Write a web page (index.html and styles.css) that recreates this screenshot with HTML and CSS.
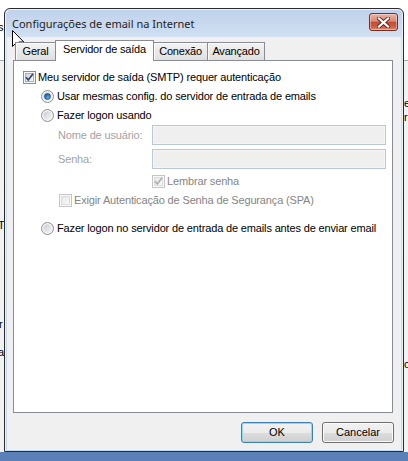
FILE: index.html
```html
<!DOCTYPE html>
<html lang="pt">
<head>
<meta charset="utf-8">
<title>Configurações de email na Internet</title>
<link rel="stylesheet" href="styles.css">
</head>
<body>
<svg class="defs" width="0" height="0" aria-hidden="true">
  <defs>
    <linearGradient id="gbox" x1="0" y1="0" x2="1" y2="1">
      <stop offset="0" stop-color="#cdd1d6"/>
      <stop offset="1" stop-color="#fbfbfb"/>
    </linearGradient>
    <linearGradient id="gboxd" x1="0" y1="0" x2="1" y2="1">
      <stop offset="0" stop-color="#e6e6e6"/>
      <stop offset="1" stop-color="#fafafa"/>
    </linearGradient>
    <linearGradient id="grad" x1="0" y1="0" x2="1" y2="1">
      <stop offset="0" stop-color="#c9ccd1"/>
      <stop offset="1" stop-color="#f7f7f7"/>
    </linearGradient>
    <radialGradient id="gdot" cx="0.6" cy="0.65" r="0.6">
      <stop offset="0" stop-color="#5fb2ea"/>
      <stop offset="1" stop-color="#175a9b"/>
    </radialGradient>
  </defs>
</svg>
<div class="desktop">
  <span class="frag frag-s">s</span>
  <span class="frag frag-t">T</span>
  <span class="frag frag-r">r</span>
  <span class="frag frag-a">a</span>
  <span class="frag frag-e">e</span>
  <span class="frag frag-r2">r</span>
  <span class="frag frag-o">o</span>

  <div class="window">
    <div class="titlebar">
      <span class="title">Configurações de email na Internet</span>
      <button class="close" aria-label="Fechar">
        <svg width="13" height="11" viewBox="0 0 13 11">
          <path d="M2 1.5 L11 9.5 M11 1.5 L2 9.5" stroke="#5e2a22" stroke-width="4" stroke-linecap="square" fill="none"/>
          <path d="M2 1.5 L11 9.5 M11 1.5 L2 9.5" stroke="#ffffff" stroke-width="2.2" stroke-linecap="square" fill="none"/>
        </svg>
      </button>
    </div>
    <div class="client">
      <div class="tabs">
        <div class="tab tab-geral">Geral</div>
        <div class="tab tab-servidor active">Servidor de saída</div>
        <div class="tab tab-conexao">Conexão</div>
        <div class="tab tab-avancado">Avançado</div>
      </div>
      <div class="panel">
        <div class="row r1">
          <svg class="ctl" width="13" height="13" viewBox="0 0 13 13"><rect x=".5" y=".5" width="12" height="12" fill="#f6f6f6" stroke="#8e8f8f"/><rect x="2.5" y="2.5" width="8" height="8" fill="url(#gbox)" stroke="#aeb3b9"/><path d="M3 6.3 L5.3 8.9 L10 2.7" fill="none" stroke="#34477e" stroke-width="1.7"/></svg>
          <span class="lbl lbl-cb">Meu servidor de saída (SMTP) requer autenticação</span>
        </div>
        <div class="row r2">
          <svg class="ctl" width="13" height="13" viewBox="0 0 13 13"><circle cx="6.5" cy="6.5" r="6" fill="#f4f4f4" stroke="#8e8f8f"/><circle cx="6.5" cy="6.5" r="4.2" fill="url(#grad)"/><circle cx="6.5" cy="6.5" r="3" fill="url(#gdot)" stroke="#1b4e86" stroke-width=".6"/></svg>
          <span class="lbl lbl-rd">Usar mesmas config. do servidor de entrada de emails</span>
        </div>
        <div class="row r3">
          <svg class="ctl" width="13" height="13" viewBox="0 0 13 13"><circle cx="6.5" cy="6.5" r="6" fill="#f4f4f4" stroke="#8e8f8f"/><circle cx="6.5" cy="6.5" r="4.2" fill="url(#grad)"/></svg>
          <span class="lbl lbl-rd">Fazer logon usando</span>
        </div>
        <div class="row r-user">
          <span class="field-lbl">Nome de usuário:</span>
          <span class="textbox"></span>
        </div>
        <div class="row r-pass">
          <span class="field-lbl">Senha:</span>
          <span class="textbox"></span>
        </div>
        <div class="row r-rem">
          <svg class="ctl" width="13" height="13" viewBox="0 0 13 13"><rect x=".5" y=".5" width="12" height="12" fill="#f9f9f9" stroke="#c5c5c5"/><rect x="2.5" y="2.5" width="8" height="8" fill="url(#gboxd)" stroke="#dcdcdc"/><path d="M3 6.3 L5.3 8.9 L10 2.7" fill="none" stroke="#b0b0b0" stroke-width="1.7"/></svg>
          <span class="lbl lbl-cb dis">Lembrar senha</span>
        </div>
        <div class="row r-spa">
          <svg class="ctl" width="13" height="13" viewBox="0 0 13 13"><rect x=".5" y=".5" width="12" height="12" fill="#f9f9f9" stroke="#c5c5c5"/><rect x="2.5" y="2.5" width="8" height="8" fill="url(#gboxd)" stroke="#dcdcdc"/></svg>
          <span class="lbl lbl-cb dis">Exigir Autenticação de Senha de Segurança (SPA)</span>
        </div>
        <div class="row r-last">
          <svg class="ctl" width="13" height="13" viewBox="0 0 13 13"><circle cx="6.5" cy="6.5" r="6" fill="#f4f4f4" stroke="#8e8f8f"/><circle cx="6.5" cy="6.5" r="4.2" fill="url(#grad)"/></svg>
          <span class="lbl lbl-rd">Fazer logon no servidor de entrada de emails antes de enviar email</span>
        </div>
      </div>
      <div class="buttons">
        <button class="btn default">OK</button>
        <button class="btn">Cancelar</button>
      </div>
    </div>
  </div>

  <svg class="cursor" width="13" height="20" viewBox="0 0 13 20">
    <path d="M0.5 0.5 L0.5 16.5 L4.3 12.8 L6.8 18.6 L9.2 17.6 L6.8 12 L11.8 12 Z" fill="#ffffff" stroke="#000000" stroke-width="1" stroke-linejoin="miter"/>
  </svg>
</div>
</body>
</html>
```

FILE: styles.css
```css
* { box-sizing: border-box; }

html, body {
  margin: 0;
  padding: 0;
}

body {
  width: 408px;
  height: 461px;
  overflow: hidden;
  font-family: "Liberation Sans", Arial, sans-serif;
  font-size: 11px;
  color: #000;
}

.defs {
  position: absolute;
  width: 0;
  height: 0;
}

.desktop {
  position: relative;
  width: 408px;
  height: 461px;
  overflow: hidden;
  background:
    linear-gradient(#ffffff 0 60px, #a7a7a7 60px 61px, #f2f2f2 61px 452px, #5a80b7 452px);
}

/* fragments of the application behind the dialog */
.frag {
  position: absolute;
  font-size: 11px;
  line-height: 12px;
  color: #000;
}
.frag-s { left: -2px; top: 21px; }
.frag-t { left: -2px; top: 219px; }
.frag-r { left: -1px; top: 318px; }
.frag-a { left: -2px; top: 346px; }
.frag-e { left: 404px; top: 97px; }
.frag-r2 { left: 404px; top: 111px; }
.frag-o { left: 404px; top: 358px; }

/* window frame */
.window {
  position: absolute;
  left: 4px;
  top: 8px;
  width: 400px;
  height: 444px;
  border: 1px solid #2b2b2b;
  border-radius: 6px 6px 0 0;
  background: linear-gradient(#bfd2eb, #d2e1f2 30px, #c4d7ee);
  padding: 0 2px 1px;
  display: flex;
  flex-direction: column;
  box-shadow: inset 1px 1px 0 #e9f1fa, inset -1px 0 0 #e9f1fa;
}

.titlebar {
  height: 28px;
  display: flex;
  align-items: center;
  justify-content: space-between;
  padding: 0 3px 0 5px;
}

.title {
  font-family: "Noto Sans", "Open Sans", sans-serif;
  font-size: 11px;
  color: #1e1e1e;
  white-space: nowrap;
}

.close {
  align-self: flex-start;
  margin-top: 4px;
  width: 29px;
  height: 18px;
  padding: 0;
  border: 1px solid #6e2d25;
  border-radius: 3px;
  background: linear-gradient(#ebb3a5, #dc8874 45%, #c64b31 52%, #cc5e45 80%, #dd8c72);
  box-shadow: inset 0 0 0 1px rgba(255, 235, 230, 0.45);
  display: flex;
  align-items: center;
  justify-content: center;
}

/* client area */
.client {
  flex: 1;
  background: #f0f0f0;
  padding: 3px 7px 7px 6px;
  display: flex;
  flex-direction: column;
}

.tabs {
  height: 20px;
  display: flex;
  align-items: flex-end;
  padding-left: 2px;
  position: relative;
  z-index: 1;
}

.tab {
  height: 18px;
  margin-left: -1px;
  border: 1px solid #898c95;
  border-bottom: none;
  background: linear-gradient(#f3f3f3, #e9e9e9 50%, #e0e0e0);
  box-shadow: inset 1px 1px 0 #fbfbfb;
  text-align: center;
  line-height: 13px;
  padding-top: 2px;
  white-space: nowrap;
  letter-spacing: -0.2px;
}
.tab-geral { margin-left: 0; width: 41px; }
.tab-servidor { width: 99px; }
.tab-conexao { width: 55px; }
.tab-avancado { width: 58px; }

.tab.active {
  height: 21px;
  margin-bottom: -1px;
  background: #ffffff;
  box-shadow: none;
  padding-top: 2px;
  position: relative;
  z-index: 2;
}

.panel {
  height: 353px;
  margin-right: 1px;
  border: 1px solid #898c95;
  background: #ffffff;
  display: flex;
  flex-direction: column;
}

.row {
  display: flex;
  align-items: center;
  height: 13px;
  line-height: 13px;
  white-space: nowrap;
}

.ctl { flex: none; display: block; }

.lbl { letter-spacing: -0.15px; }
.lbl-cb { margin-left: 2px; }
.lbl-rd { margin-left: 3px; }
.dis { color: #858585; }

.r1 { margin-top: 10px; padding-left: 9px; }
.r2 { margin-top: 6px; padding-left: 27px; }
.r3 { margin-top: 6px; padding-left: 27px; }
.r-user { margin-top: 3px; height: 20px; padding-left: 44px; }
.r-pass { margin-top: 4px; height: 20px; padding-left: 44px; }
.r-rem { margin-top: 6px; padding-left: 138px; }
.r-spa { margin-top: 6px; padding-left: 45px; }
.r-last { margin-top: 15px; padding-left: 27px; }

.field-lbl {
  width: 94px;
  color: #a3a3a3;
  letter-spacing: -0.15px;
}

.textbox {
  width: 234px;
  height: 20px;
  border: 1px solid #b9c7d6;
  background: #efefef;
  box-shadow: inset 0 0 0 1px #f6f6f6;
}

.buttons {
  display: flex;
  justify-content: flex-end;
  gap: 9px;
  margin-top: 9px;
}

.btn {
  width: 72px;
  height: 21px;
  padding: 0;
  border: 1px solid #707070;
  border-radius: 3px;
  background: linear-gradient(#f2f2f2, #ebebeb 50%, #dddddd 50%, #cfcfcf);
  box-shadow: inset 0 0 0 1px #fbfbfb;
  font-family: "Liberation Sans", Arial, sans-serif;
  font-size: 11px;
  color: #000;
  line-height: 13px;
}

.btn.default {
  border-color: #3c7fb1;
  box-shadow: inset 0 0 0 1px #8fd9f8;
}

.cursor {
  position: absolute;
  left: 12px;
  top: 30px;
}
```
